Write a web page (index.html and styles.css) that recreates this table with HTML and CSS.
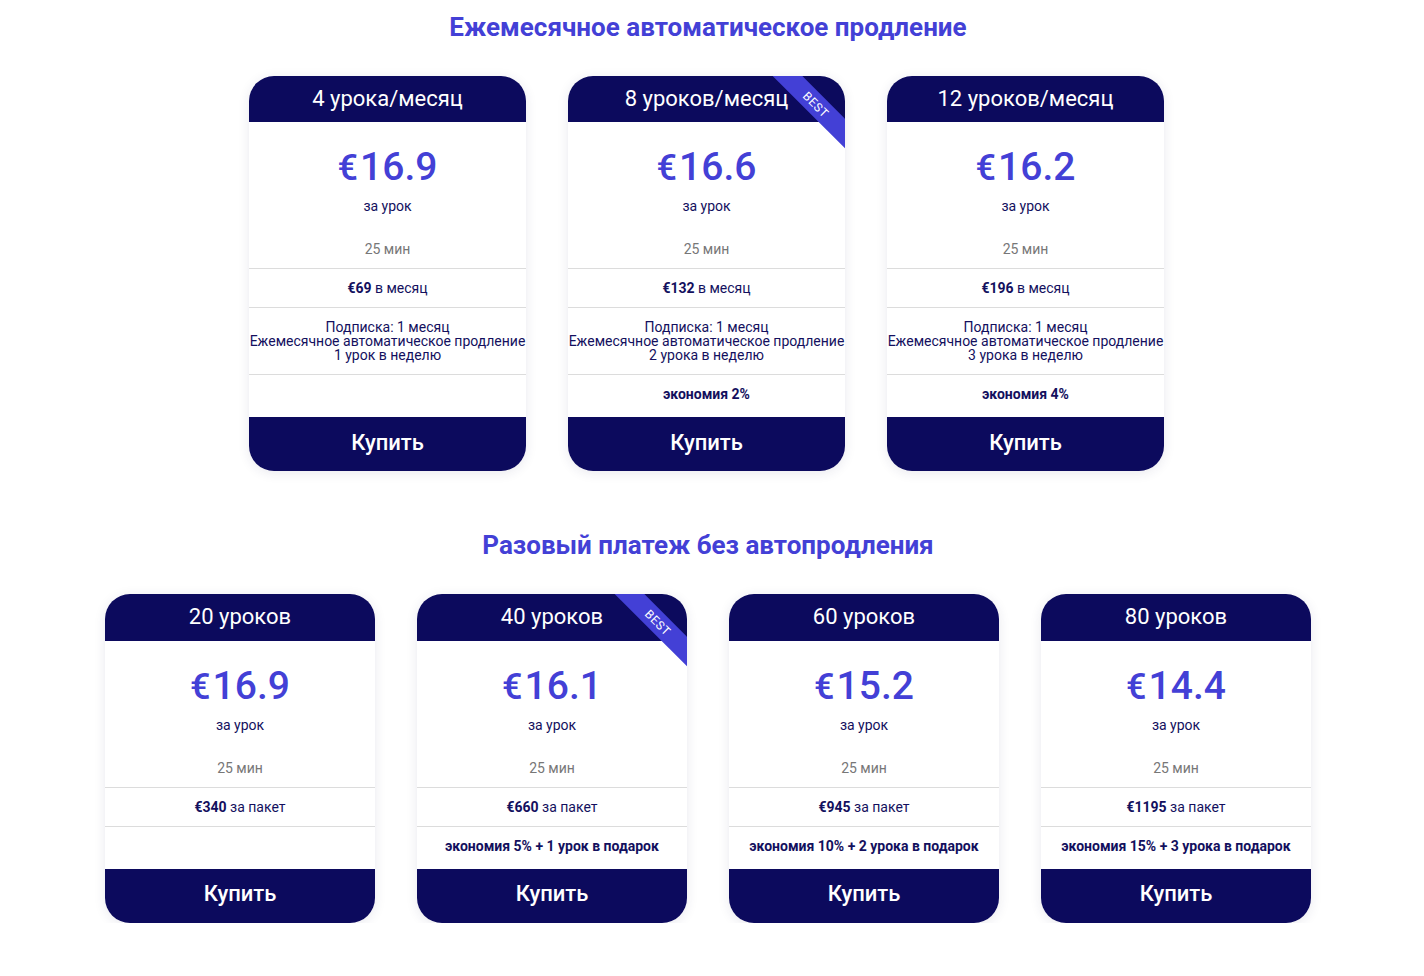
FILE: index.html
```html
<!DOCTYPE html>
<html lang="ru">
<head>
<meta charset="utf-8">
<title>Тарифы</title>
<link rel="stylesheet" href="styles.css">
</head>
<body>
<div class="page">
  <section class="group">
    <h2 class="group-title">Ежемесячное автоматическое продление</h2>
    <div class="cards cards-3">
      <div class="card">
        <div class="card-head">4 урока/месяц</div>
        <div class="card-price">
          <div class="price"><span class="cur">€</span>16.9</div>
          <div class="per">за урок</div>
          <div class="dur">25 мин</div>
        </div>
        <div class="row row-total"><b>€69</b> в месяц</div>
        <div class="row row-desc">Подписка: 1 месяц<br>Ежемесячное автоматическое продление<br>1 урок в неделю</div>
        <div class="row row-save"></div>
        <button class="buy">Купить</button>
      </div>
      <div class="card">
        <div class="ribbon">BEST</div>
        <div class="card-head">8 уроков/месяц</div>
        <div class="card-price">
          <div class="price"><span class="cur">€</span>16.6</div>
          <div class="per">за урок</div>
          <div class="dur">25 мин</div>
        </div>
        <div class="row row-total"><b>€132</b> в месяц</div>
        <div class="row row-desc">Подписка: 1 месяц<br>Ежемесячное автоматическое продление<br>2 урока в неделю</div>
        <div class="row row-save">экономия 2%</div>
        <button class="buy">Купить</button>
      </div>
      <div class="card">
        <div class="card-head">12 уроков/месяц</div>
        <div class="card-price">
          <div class="price"><span class="cur">€</span>16.2</div>
          <div class="per">за урок</div>
          <div class="dur">25 мин</div>
        </div>
        <div class="row row-total"><b>€196</b> в месяц</div>
        <div class="row row-desc">Подписка: 1 месяц<br>Ежемесячное автоматическое продление<br>3 урока в неделю</div>
        <div class="row row-save">экономия 4%</div>
        <button class="buy">Купить</button>
      </div>
    </div>
  </section>

  <section class="group">
    <h2 class="group-title">Разовый платеж без автопродления</h2>
    <div class="cards cards-4">
      <div class="card">
        <div class="card-head">20 уроков</div>
        <div class="card-price">
          <div class="price"><span class="cur">€</span>16.9</div>
          <div class="per">за урок</div>
          <div class="dur">25 мин</div>
        </div>
        <div class="row row-total"><b>€340</b> за пакет</div>
        <div class="row row-save"></div>
        <button class="buy">Купить</button>
      </div>
      <div class="card">
        <div class="ribbon">BEST</div>
        <div class="card-head">40 уроков</div>
        <div class="card-price">
          <div class="price"><span class="cur">€</span>16.1</div>
          <div class="per">за урок</div>
          <div class="dur">25 мин</div>
        </div>
        <div class="row row-total"><b>€660</b> за пакет</div>
        <div class="row row-save">экономия 5% + 1 урок в подарок</div>
        <button class="buy">Купить</button>
      </div>
      <div class="card">
        <div class="card-head">60 уроков</div>
        <div class="card-price">
          <div class="price"><span class="cur">€</span>15.2</div>
          <div class="per">за урок</div>
          <div class="dur">25 мин</div>
        </div>
        <div class="row row-total"><b>€945</b> за пакет</div>
        <div class="row row-save">экономия 10% + 2 урока в подарок</div>
        <button class="buy">Купить</button>
      </div>
      <div class="card">
        <div class="card-head">80 уроков</div>
        <div class="card-price">
          <div class="price"><span class="cur">€</span>14.4</div>
          <div class="per">за урок</div>
          <div class="dur">25 мин</div>
        </div>
        <div class="row row-total"><b>€1195</b> за пакет</div>
        <div class="row row-save">экономия 15% + 3 урока в подарок</div>
        <button class="buy">Купить</button>
      </div>
    </div>
  </section>
</div>
</body>
</html>
```

FILE: styles.css
```css
* { box-sizing: border-box; }
html, body { margin: 0; padding: 0; background: #fff; }
body {
  font-family: Roboto, "Liberation Sans", sans-serif;
  color: #13105e;
}
.page {
  width: 1416px;
  padding-top: 12px;
}
.group { display: flex; flex-direction: column; align-items: center; }
.group + .group { margin-top: 59px; }
.group-title {
  margin: 0 0 34px;
  font-size: 26px;
  line-height: 30px;
  font-weight: 700;
  color: #4340d6;
  text-align: center;
}
.cards { display: flex; justify-content: center; gap: 42px; }
.cards-3 { margin-right: 3px; }
.cards-3 .card { width: 277px; }
.cards-4 .card { width: 270px; }
.card {
  position: relative;
  display: flex;
  flex-direction: column;
  background: #fff;
  border-radius: 25px;
  overflow: hidden;
  box-shadow: 0 2px 12px rgba(40, 40, 90, 0.10);
  text-align: center;
}
.card-head {
  height: 46px;
  background: #0c0a5d;
  color: #fff;
  font-size: 22px;
  line-height: 45px;
  font-weight: 400;
}
.cards-4 .card-head { height: 47px; line-height: 45px; }
.card-price {
  padding: 23px 0 11px;
  border-bottom: 1px solid #dcdcdc;
}
.price {
  height: 44px;
  font-size: 39px;
  line-height: 44px;
  font-weight: 500;
  color: #4340d6;
}
.cur { margin-right: 2px; font-size: 36px; line-height: 1; }
.per {
  margin-top: 9px;
  font-size: 14px;
  line-height: 16px;
}
.dur {
  margin-top: 27px;
  font-size: 14px;
  line-height: 16px;
  color: #777;
}
.row {
  border-bottom: 1px solid #dcdcdc;
  font-size: 14px;
}
.row-total {
  height: 39px;
  line-height: 38px;
}
.row-total b { font-weight: 700; }
.row-desc {
  height: 67px;
  padding-top: 12px;
  line-height: 14px;
}
.row-save {
  height: 42px;
  line-height: 39px;
  border-bottom: none;
  font-size: 14px;
  font-weight: 700;
}
.buy {
  height: 54px;
  border: none;
  margin: 0;
  padding: 0 0 4px;
  background: #0c0a5d;
  color: #fff;
  font-family: inherit;
  font-size: 22px;
  font-weight: 500;
  cursor: pointer;
}
.cards-4 .buy { padding-bottom: 6px; }
.ribbon {
  position: absolute;
  top: 18px;
  right: -31px;
  width: 120px;
  height: 21px;
  background: #4340d6;
  color: #fff;
  font-size: 12px;
  line-height: 22px;
  letter-spacing: 0.5px;
  transform: rotate(45deg);
  text-align: center;
  z-index: 2;
}
```
